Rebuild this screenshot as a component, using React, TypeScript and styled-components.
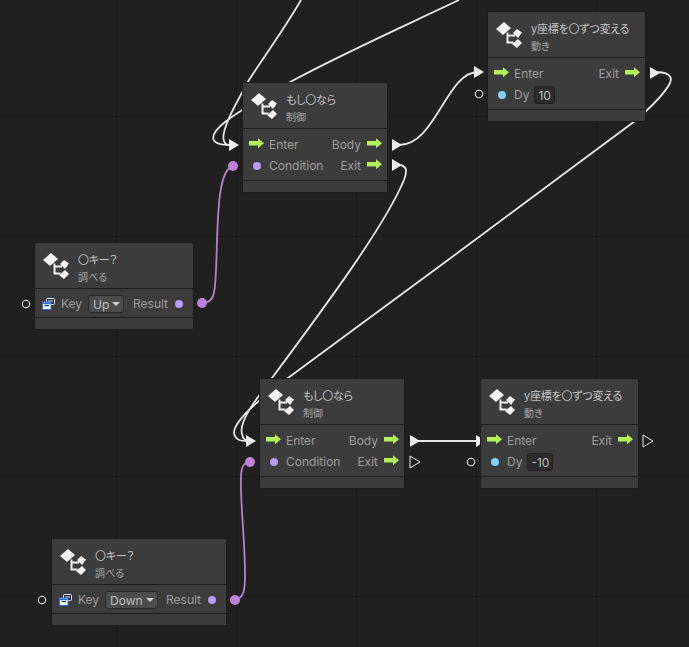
import React from "react";
import styled, { createGlobalStyle } from "styled-components";

const GlobalStyle = createGlobalStyle`
  html, body {
    margin: 0;
    padding: 0;
    background: #202020;
  }
`;

const Canvas = styled.div`
  position: relative;
  width: 689px;
  height: 647px;
  overflow: hidden;
  background-color: #202020;
  background-image:
    linear-gradient(to right, #191919 1px, transparent 1px),
    linear-gradient(to bottom, #191919 1px, transparent 1px);
  background-size: 120px 120px;
  background-position: -4px -4px;
  font-family: Inter, "Noto Sans CJK JP", sans-serif;
`;

const Wires = styled.svg`
  position: absolute;
  inset: 0;
`;

const Node = styled.div<{ $x: number; $y: number; $w: number }>`
  position: absolute;
  left: ${(p) => p.$x}px;
  top: ${(p) => p.$y}px;
  width: ${(p) => p.$w}px;
  box-sizing: border-box;
  display: flex;
  flex-direction: column;
  background: #3c3c3c;
  border: 1px solid #1d1d1d;
  border-radius: 2px;
`;

const Header = styled.div`
  height: 45px;
  display: flex;
  align-items: center;
  gap: 8px;
  padding-left: 7px;
  border-bottom: 1px solid #1c1c1c;
`;

const Titles = styled.div`
  display: flex;
  flex-direction: column;
  gap: 4px;
  margin-top: 5px;
  font-feature-settings: "palt";
`;

const Title = styled.div`
  font-size: 11px;
  line-height: 14px;
  letter-spacing: -0.2px;
  color: #c4c4c4;
  white-space: nowrap;
`;

const Category = styled.div`
  font-size: 10px;
  line-height: 12px;
  color: #a6a6a6;
`;

const Body = styled.div<{ $single?: boolean }>`
  display: flex;
  flex-direction: column;
  padding: ${(p) => (p.$single ? "4px 0 2px" : "5px 0 3px")};
  border-bottom: 1px solid #1c1c1c;
`;

const Row = styled.div<{ $pad?: number; $single?: boolean }>`
  height: ${(p) => (p.$single ? 22 : 21.5)}px;
  display: flex;
  align-items: center;
  padding: 0 ${(p) => p.$pad ?? 5}px 0 6px;
`;

const Slot = styled.div`
  width: 15px;
  margin-right: 5px;
  display: flex;
  align-items: center;
  justify-content: center;
`;

const Label = styled.span`
  font-size: 12px;
  line-height: 14px;
  color: #9c9c9c;
`;

const RightLabel = styled(Label)<{ $gap?: number }>`
  margin-left: auto;
  margin-right: ${(p) => p.$gap ?? 6}px;
`;

const DataDot = styled.span<{ $color: string }>`
  width: 8px;
  height: 8px;
  border-radius: 50%;
  background: ${(p) => p.$color};
`;

const NumberBox = styled.span`
  margin-left: 5px;
  height: 16px;
  padding: 0 3px;
  display: flex;
  align-items: center;
  font-size: 12px;
  color: #bdbdbd;
  background: #2b2b2b;
  border: 1px solid #212121;
  border-radius: 3px;
`;

const Select = styled.span`
  margin-left: 6px;
  height: 16px;
  padding: 0 3px 0 4px;
  display: flex;
  align-items: center;
  gap: 3px;
  font-size: 12px;
  color: #bdbdbd;
  background: #4c4c4c;
  border: 1px solid #2c2c2c;
  border-radius: 3px;
`;

const Caret = styled.span`
  width: 0;
  height: 0;
  border-left: 4px solid transparent;
  border-right: 4px solid transparent;
  border-top: 4px solid #cfcfcf;
`;

const Footer = styled.div`
  height: 11px;
`;

const ArrowSvg = styled.svg`
  flex: none;
  margin-top: -3px;
`;

const NodeIcon = () => (
  <svg width="28" height="30" viewBox="0 0 28 30" style={{ flex: "none" }}>
    <path d="M1 9 9 2 16 8 8 15Z" fill="#f2f2f2" />
    <path d="M18 13 22 9 27 12.5 23 18Z" fill="#f2f2f2" />
    <path d="M17 24 23 19 27 23 22 28Z" fill="#f2f2f2" />
    <path d="M12.5 12.5V22.5H18.5M12.5 15.5H20" fill="none" stroke="#f2f2f2" strokeWidth="2" />
  </svg>
);

const FlowArrow = () => (
  <ArrowSvg width="15" height="11" viewBox="0 0 15 11">
    <path d="M0 3H9V.2L15 5.2 9 10.2V7.5H0Z" fill="#b4f25c" />
  </ArrowSvg>
);

const VariableIcon = () => (
  <svg width="13" height="12" viewBox="0 0 13 12">
    <rect x="4.5" y=".5" width="8" height="6" rx="1" fill="#1d2a44" stroke="#e8eef8" />
    <path d="M6 3h5" stroke="#e8eef8" />
    <rect x=".5" y="4" width="8.5" height="7.5" fill="#f4f6fa" stroke="#2d6fd0" />
    <path d="M2.5 7.5h4.5" stroke="#153c80" strokeWidth="1.4" />
    <path d="M1 4.5h7.5V6H1Z" fill="#2d6fd0" />
  </svg>
);

const PURPLE = "#b79bef";
const BLUE = "#7fd2ff";

const BranchNode = ({ x, y }: { x: number; y: number }) => (
  <Node $x={x} $y={y} $w={146}>
    <Header>
      <NodeIcon />
      <Titles>
        <Title>もし〇なら</Title>
        <Category>制御</Category>
      </Titles>
    </Header>
    <Body>
      <Row>
        <Slot>
          <FlowArrow />
        </Slot>
        <Label>Enter</Label>
        <RightLabel>Body</RightLabel>
        <FlowArrow />
      </Row>
      <Row>
        <Slot>
          <DataDot $color={PURPLE} />
        </Slot>
        <Label>Condition</Label>
        <RightLabel>Exit</RightLabel>
        <FlowArrow />
      </Row>
    </Body>
    <Footer />
  </Node>
);

const MoveNode = ({ x, y, dy }: { x: number; y: number; dy: string }) => (
  <Node $x={x} $y={y} $w={159}>
    <Header>
      <NodeIcon />
      <Titles>
        <Title>y座標を〇ずつ変える</Title>
        <Category>動き</Category>
      </Titles>
    </Header>
    <Body>
      <Row>
        <Slot>
          <FlowArrow />
        </Slot>
        <Label>Enter</Label>
        <RightLabel>Exit</RightLabel>
        <FlowArrow />
      </Row>
      <Row>
        <Slot>
          <DataDot $color={BLUE} />
        </Slot>
        <Label>Dy</Label>
        <NumberBox>{dy}</NumberBox>
      </Row>
    </Body>
    <Footer />
  </Node>
);

const KeyNode = ({ x, y, w, value }: { x: number; y: number; w: number; value: string }) => (
  <Node $x={x} $y={y} $w={w}>
    <Header>
      <NodeIcon />
      <Titles>
        <Title>〇キー？</Title>
        <Category>調べる</Category>
      </Titles>
    </Header>
    <Body $single>
      <Row $pad={10} $single>
        <Slot>
          <VariableIcon />
        </Slot>
        <Label>Key</Label>
        <Select>
          {value}
          <Caret />
        </Select>
        <RightLabel $gap={7}>Result</RightLabel>
        <DataDot $color={PURPLE} />
      </Row>
    </Body>
    <Footer />
  </Node>
);

const Triangle = ({ x, y, hollow }: { x: number; y: number; hollow?: boolean }) => (
  <path
    d={`M${x} ${y - 6}L${x + 10} ${y}L${x} ${y + 6}Z`}
    fill={hollow ? "none" : "#ececec"}
    stroke="#ececec"
    strokeWidth={hollow ? 1 : 0}
  />
);

const OpenPort = ({ x, y }: { x: number; y: number }) => (
  <circle cx={x} cy={y} r="3.7" fill="none" stroke="#e4e4e4" strokeWidth="1.1" />
);

const whiteWires = [
  "M301 0C285 28 265 55 249 80C235 105 218 135 225 143C226 145 228 145 232 145",
  "M459 0C400 28 340 55 292 81C270 93 240 110 225 122C210 134 207 145 230 145",
  "M398 145C436 146 446 72 478 72",
  "M398 165C408 165 407 172 404 180C385 225 330 300 272 378C262 392 238 420 242 434C243 440 246 441 250 441",
  "M655 72C668 72 673 76 670 83C664 95 650 108 635 121L448 260C400 295 340 340 288 378C262 397 228 425 235 436C237 440 240 441 248 441",
  "M412 441H480",
];

const purpleWires = [
  "M202 303C214 303 215 295 216 270C218 230 216 170 233 166",
  "M235 600C244 598 245 590 245 575C245 540 240 500 241 478C241 466 244 462 250 462",
];

const App = () => (
  <Canvas>
    <GlobalStyle />
    <Wires width="689" height="647" viewBox="0 0 689 647">
      {whiteWires.map((d) => (
        <path key={d} d={d} fill="none" stroke="#e6e6e6" strokeWidth="1.8" />
      ))}
      {purpleWires.map((d) => (
        <path key={d} d={d} fill="none" stroke="#b67fd0" strokeWidth="1.8" />
      ))}
      <circle cx="202" cy="303" r="5" fill="#bd80d6" />
      <circle cx="233" cy="166" r="5" fill="#bd80d6" />
      <circle cx="235" cy="600" r="5" fill="#bd80d6" />
      <circle cx="250" cy="462" r="5" fill="#bd80d6" />
      <Triangle x={229} y={145} />
      <Triangle x={392} y={145} />
      <Triangle x={392} y={165} />
      <Triangle x={474} y={72} />
      <Triangle x={650} y={73} />
      <Triangle x={246} y={441} />
      <Triangle x={410} y={441} />
      <Triangle x={410} y={462} hollow />
      <Triangle x={476} y={441} />
      <Triangle x={643} y={441} hollow />
      <OpenPort x={479} y={94} />
      <OpenPort x={471} y={462} />
      <OpenPort x={26} y={304} />
      <OpenPort x={42} y={600} />
    </Wires>
    <BranchNode x={242} y={82} />
    <BranchNode x={259} y={378} />
    <MoveNode x={487} y={11} dy="10" />
    <MoveNode x={480} y={378} dy="-10" />
    <KeyNode x={34} y={242} w={160} value="Up" />
    <KeyNode x={51} y={538} w={176} value="Down" />
  </Canvas>
);

export default App;
